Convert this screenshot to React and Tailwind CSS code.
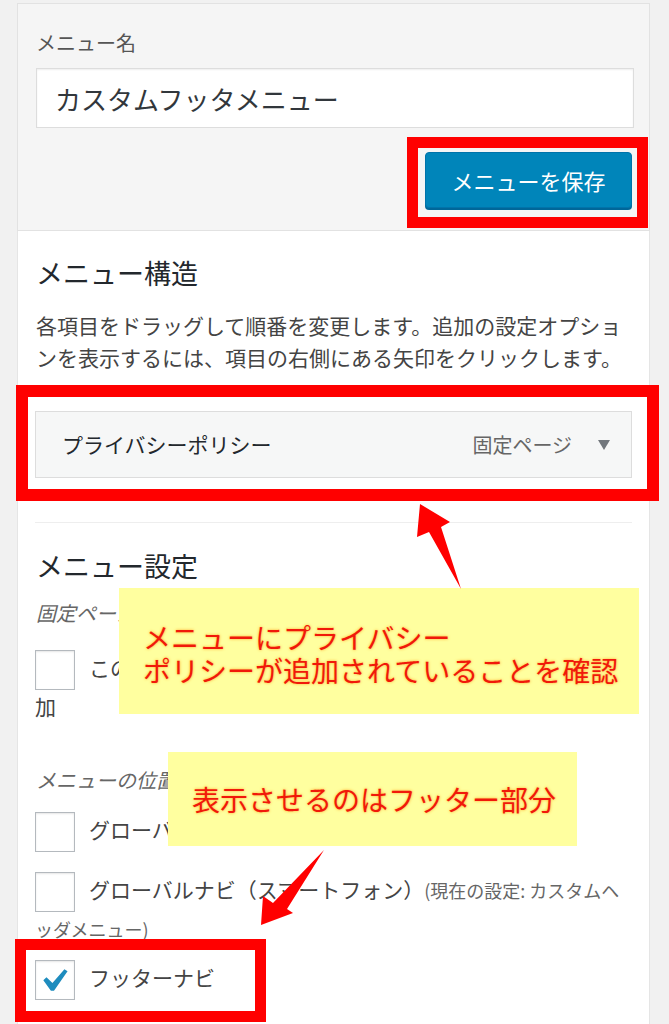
import React from 'react';

// checkbox in WordPress admin style
const Box = ({ checked }) => (
  <span className="inline-flex items-center justify-center w-10 h-10 align-middle border border-[#b4b9be] bg-white shadow-[inset_0_1px_2px_rgba(0,0,0,0.1)] mr-[14px]">
    {checked && (
      <svg viewBox="5.3 4.4 11.4 10.3" className="w-[27px] h-[24px]">
        <path d="M14.83 4.89l1.34.94-5.81 8.38H9.02L5.78 9.67l1.34-1.25 2.57 2.4z" fill="#1e8cbe" />
      </svg>
    )}
  </span>
);

const RedBox = ({ className }) => (
  <span className={`absolute border-[#ff0000] pointer-events-none ${className}`} />
);

const App = () => {
  return (
    <div className="relative min-h-[1024px] h-[1024px] overflow-hidden bg-[#f1f1f1] font-['Noto_Sans_CJK_JP','Noto_Sans',sans-serif]">
      <div className="ml-[17px] mr-[19px] pt-[3px] flex flex-col h-full">
        {/* header: menu name + save */}
        <div className="border border-[#e2e2e2] bg-[#f5f5f5] pl-[18px] pr-[15px] pt-[25px] pb-[22px]">
          <div className="text-[20px] leading-[28px] text-[#555]">メニュー名</div>
          <div className="mt-[11px] h-[60px] border border-[#ddd] bg-white shadow-[inset_0_1px_2px_rgba(0,0,0,0.07)] flex items-center pl-[18px] text-[26px] text-[#32373c]">
            カスタムフッタメニュー
          </div>
          <div className="mt-[24px] flex justify-end pr-[2px]">
            <div className="relative">
              <button className="h-[56px] w-[207px] rounded-[4px] bg-[#0085ba] border border-[#0073aa] shadow-[0_2px_0_#006799] text-white text-[22px]">
                メニューを保存
              </button>
              <RedBox className="-left-[18px] -right-[16px] -top-[15px] -bottom-[20px] border-[11px]" />
            </div>
          </div>
        </div>

        {/* body */}
        <div className="flex-1 bg-white border-x border-[#e5e5e5] pl-[17px] pr-[15px] pt-[24px]">
          <h2 className="pl-px text-[27px] leading-[36px] text-[#23282d]">メニュー構造</h2>
          <p className="pl-px mt-[18px] text-[21px] leading-[32px] text-[#444]">
            各項目をドラッグして順番を変更します。追加の設定オプションを表示するには、項目の右側にある矢印をクリックします。
          </p>

          <div className="relative mt-[38px] mr-[2px]">
            <div className="h-[67px] border border-[#ddd] bg-[#f6f7f7] flex items-center pl-[26px] pr-[21px]">
              <span className="text-[21px] text-[#23282d]">プライバシーポリシー</span>
              <span className="ml-auto text-[20px] text-[#666]">固定ページ</span>
              <svg viewBox="0 0 12 10" className="ml-[26px] w-[12px] h-[10px]">
                <path d="M0 0h12L6 10z" fill="#72777c" />
              </svg>
            </div>
            <RedBox className="-left-[19px] -right-[27px] -top-[26px] -bottom-[23px] border-[12px]" />
          </div>

          <div className="mt-[44px] mr-[2px] h-px bg-[#eee]" />

          <h2 className="pl-px mt-[25px] text-[27px] leading-[36px] text-[#23282d]">メニュー設定</h2>
          <div className="pl-px mt-[15px] text-[20px] leading-[28px] italic text-[#666]">固定ページを自動追加</div>
          <label className="block mt-[23px] text-[21px] leading-[33px] text-[#444]">
            <Box />このメニューに新しいトップレベルページを自動的に追加
          </label>

          <div className="pl-px mt-[43px] text-[20px] leading-[28px] italic text-[#666]">メニューの位置</div>
          <label className="block mt-[18px] text-[21px] leading-[33px] text-[#444]">
            <Box />グローバルナビ（PC）
          </label>
          <label className="block mt-[20px] text-[21px] leading-[33px] text-[#444]">
            <Box />グローバルナビ（スマートフォン）
            <span className="text-[18px] text-[#666]">(現在の設定: カスタムヘッダメニュー)</span>
          </label>
          <label className="relative block mt-[14px] text-[21px] leading-[33px] text-[#444]">
            <Box checked />フッターナビ
            <RedBox className="-left-[20px] w-[251px] -top-[21px] -bottom-[22px] border-[11px]" />
          </label>
        </div>
      </div>

      {/* annotations */}
      <div className="absolute left-[119px] top-[588px] w-[520px] h-[126px] bg-[#ffff9f] pl-[24px] pt-[33px] text-[28px] leading-[33px] text-[#f0190a] [text-shadow:0_0_3px_#ffa726]">
        メニューにプライバシー
        <br />
        ポリシーが追加されていることを確認
      </div>
      <div className="absolute left-[168px] top-[752px] w-[409px] h-[94px] bg-[#ffff9f] pl-[24px] pt-[31px] text-[28px] leading-[33px] text-[#f0190a] [text-shadow:0_0_3px_#ffa726]">
        表示させるのはフッター部分
      </div>
      <svg className="absolute left-0 top-0 w-[669px] h-[1024px] pointer-events-none" viewBox="0 0 669 1024">
        <polygon points="420,504 450,522 441,527 461,589 429,532 417,537" fill="#ff0000" />
        <polygon points="324,850 287,909 293,913 261,925 263,896 273,903" fill="#ff0000" />
      </svg>
    </div>
  );
};

export default App;
